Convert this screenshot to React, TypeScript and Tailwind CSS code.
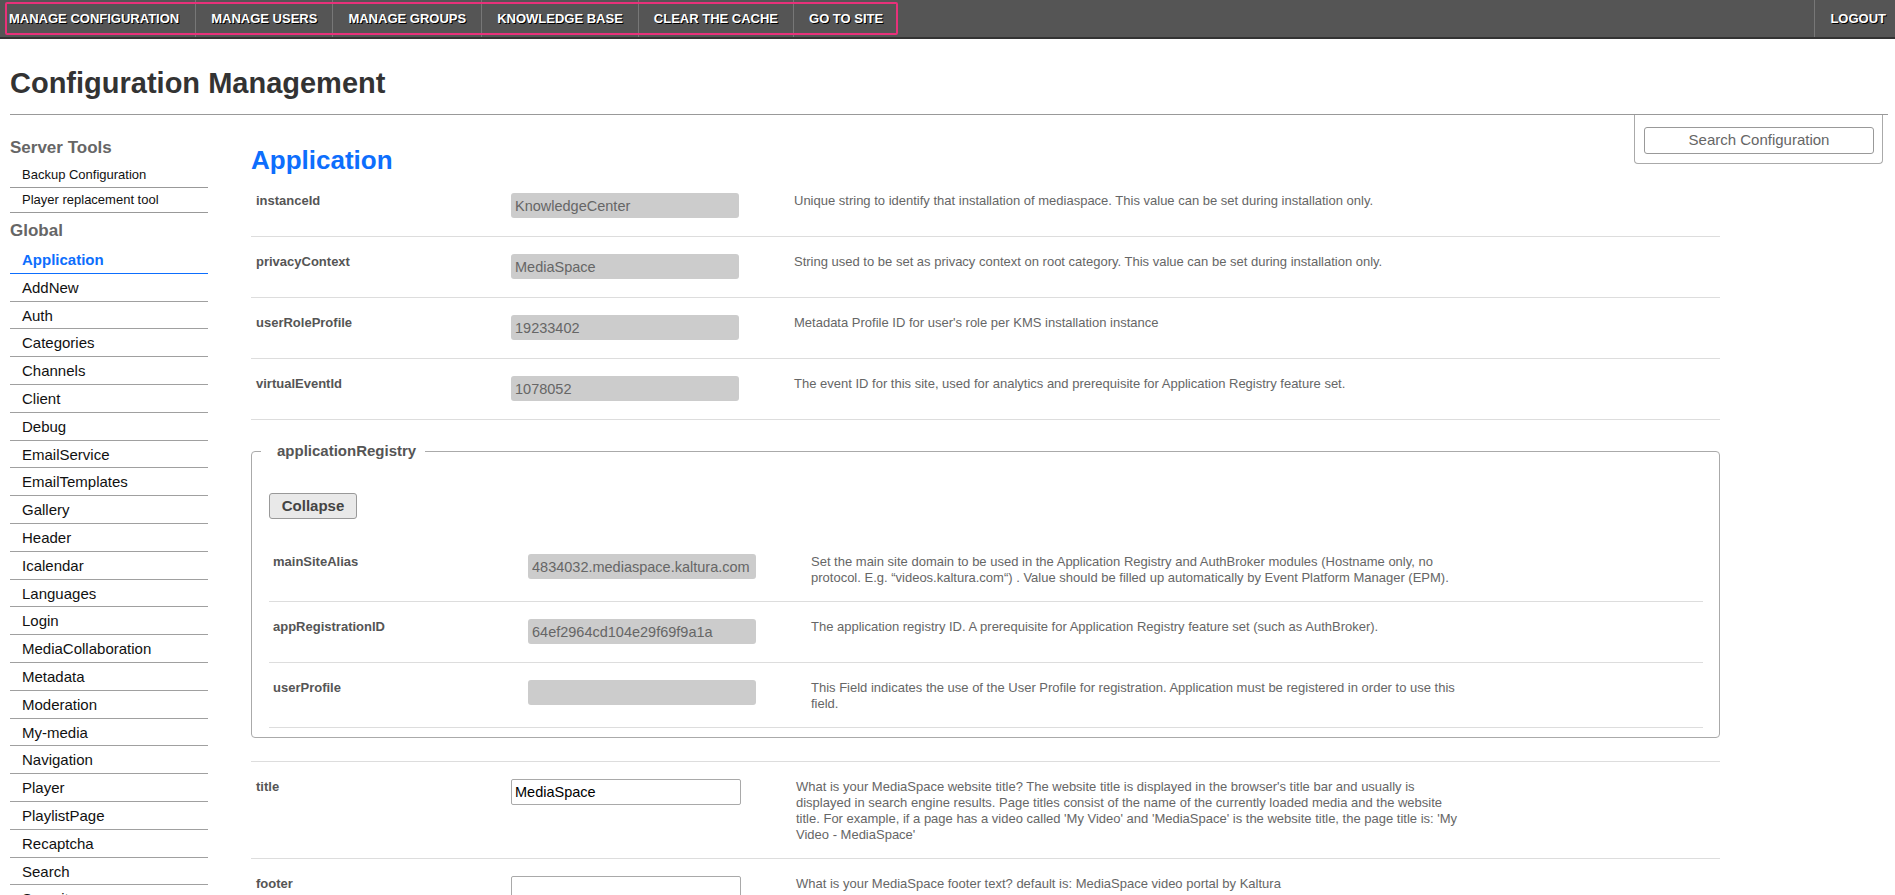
import React from 'react'

const navItems = ['MANAGE CONFIGURATION', 'MANAGE USERS', 'MANAGE GROUPS', 'KNOWLEDGE BASE', 'CLEAR THE CACHE', 'GO TO SITE']

const globalItems = [
  'Application', 'AddNew', 'Auth', 'Categories', 'Channels', 'Client', 'Debug', 'EmailService',
  'EmailTemplates', 'Gallery', 'Header', 'Icalendar', 'Languages', 'Login', 'MediaCollaboration',
  'Metadata', 'Moderation', 'My-media', 'Navigation', 'Player', 'PlaylistPage', 'Recaptcha',
  'Search', 'Security', 'Seo', 'Static',
]

type Field = { label: string; value: string; desc: string; editable?: boolean }

const appFields: Field[] = [
  { label: 'instanceId', value: 'KnowledgeCenter', desc: 'Unique string to identify that installation of mediaspace. This value can be set during installation only.' },
  { label: 'privacyContext', value: 'MediaSpace', desc: 'String used to be set as privacy context on root category. This value can be set during installation only.' },
  { label: 'userRoleProfile', value: '19233402', desc: "Metadata Profile ID for user's role per KMS installation instance" },
  { label: 'virtualEventId', value: '1078052', desc: 'The event ID for this site, used for analytics and prerequisite for Application Registry feature set.' },
]

const registryFields: Field[] = [
  { label: 'mainSiteAlias', value: '4834032.mediaspace.kaltura.com', desc: 'Set the main site domain to be used in the Application Registry and AuthBroker modules (Hostname only, no protocol. E.g. “videos.kaltura.com“) . Value should be filled up automatically by Event Platform Manager (EPM).' },
  { label: 'appRegistrationID', value: '64ef2964cd104e29f69f9a1a', desc: 'The application registry ID. A prerequisite for Application Registry feature set (such as AuthBroker).' },
  { label: 'userProfile', value: '', desc: 'This Field indicates the use of the User Profile for registration. Application must be registered in order to use this field.' },
]

const moreFields: Field[] = [
  { label: 'title', value: 'MediaSpace', editable: true, desc: "What is your MediaSpace website title? The website title is displayed in the browser's title bar and usually is displayed in search engine results. Page titles consist of the name of the currently loaded media and the website title. For example, if a page has a video called 'My Video' and 'MediaSpace' is the website title, the page title is: 'My Video - MediaSpace'" },
  { label: 'footer', value: '', editable: true, desc: 'What is your MediaSpace footer text? default is: MediaSpace video portal by Kaltura' },
]

function ConfigRow({ field, inner }: { field: Field; inner?: boolean }) {
  return (
    <div className={`flex border-b border-[#dddddd] pt-[17px] pb-[15px] ${inner ? 'pl-[4px]' : 'pl-[5px]'}`}>
      <div className="w-[255px] shrink-0 text-[13px] leading-[16px] font-bold text-[#555]">
        {field.label}
      </div>
      {field.editable ? (
        <input
          readOnly
          value={field.value}
          className="w-[230px] h-[26px] mb-[3px] shrink-0 border border-[#a9a9a9] rounded-[2px] bg-white px-[3px] text-[14.5px] text-black outline-none"
        />
      ) : (
        <input
          readOnly
          value={field.value}
          className="w-[228px] h-[25px] mb-[3px] shrink-0 rounded-[3px] bg-[#cccccc] pl-[4px] text-[14.5px] text-[#666] outline-none"
        />
      )}
      <div className="ml-[55px] w-[665px] text-[13px] leading-[16px] text-[#666]">{field.desc}</div>
    </div>
  )
}

export default function App() {
  return (
    <div className="min-h-screen bg-white font-['Liberation_Sans',Arial,sans-serif] text-black">
      {/* top bar */}
      <div className="relative flex h-[39px] bg-[#555555] border-b-2 border-[#333]">
        {navItems.map((item, i) => (
          <div
            key={item}
            className={`flex items-center h-full border-r border-[#777] text-[13px] font-bold text-white [text-shadow:1px_1px_0_#000] ${i === 0 ? 'pl-[9px] pr-[16px]' : 'px-[15px]'} ${i === navItems.length - 1 ? 'border-r-0' : ''}`}
          >
            {item}
          </div>
        ))}
        <div className="ml-auto flex items-center h-full border-l border-[#777] pl-[15px] pr-[9px] text-[13px] font-bold text-white [text-shadow:1px_1px_0_#000]">
          LOGOUT
        </div>
        <div className="pointer-events-none absolute left-[5px] top-[2px] w-[893px] h-[33px] border-2 border-[#e8317a] rounded-[2px]" />
      </div>

      <h1 className="ml-[10px] mt-[26px] mb-[13px] text-[29px] leading-[36px] font-bold text-[#333]">
        Configuration Management
      </h1>
      <div className="ml-[10px] mr-[7px] border-t border-[#999]" />

      <div className="relative flex">
        {/* search panel */}
        <div className="absolute right-[12px] top-0 w-[249px] border border-t-0 border-[#aaa] rounded-b-[4px] pt-[12px] pb-[9px] pl-[9px] pr-[8px] bg-white">
          <div className="h-[27px] border border-[#999] rounded-[3px] flex items-center justify-center text-[15px] text-[#666]">
            Search Configuration
          </div>
        </div>

        {/* sidebar */}
        <div className="ml-[10px] w-[198px] shrink-0">
          <div className="mt-[23px] mb-[5px] text-[17px] leading-[20px] font-bold text-[#666]">Server Tools</div>
          {['Backup Configuration', 'Player replacement tool'].map((t) => (
            <div key={t} className="h-[25px] border-b border-[#999] pl-[12px] text-[13px] leading-[24px] text-[#111]">
              {t}
            </div>
          ))}
          <div className="mt-[8px] mb-[5px] text-[17px] leading-[20px] font-bold text-[#666]">Global</div>
          {globalItems.map((t, i) => (
            <div
              key={t}
              className={`h-[27.8px] border-b pl-[12px] text-[15px] leading-[27px] ${i === 0 ? 'border-[#0d6efd] font-bold text-[#0d6efd]' : 'border-[#a0a0a0] text-[#111]'}`}
            >
              {t}
            </div>
          ))}
        </div>

        {/* main */}
        <div className="ml-[43px] w-[1469px] shrink-0">
          <h2 className="mt-[30px] mb-[1px] text-[26px] leading-[30px] font-bold text-[#0d6efd]">Application</h2>
          {appFields.map((f) => (
            <ConfigRow key={f.label} field={f} />
          ))}

          <fieldset className="mt-[22px] mb-[23px] border border-[#aaa] rounded-[4px] p-0 pb-[9px]">
            <legend className="ml-[9px] pl-[16px] pr-[9px] text-[15px] leading-[18px] font-bold text-[#555]">
              applicationRegistry
            </legend>
            <button className="mt-[33px] ml-[17px] w-[88px] h-[26px] border border-[#999] rounded-[3px] bg-[#e9e9e9] text-[15px] font-bold text-[#444]">
              Collapse
            </button>
            <div className="ml-[17px] mr-[16px] mt-[18px]">
              {registryFields.map((f) => (
                <ConfigRow key={f.label} field={f} inner />
              ))}
            </div>
          </fieldset>

          <div className="border-t border-[#dddddd]">
            {moreFields.map((f) => (
              <ConfigRow key={f.label} field={f} />
            ))}
          </div>
        </div>
      </div>
    </div>
  )
}
